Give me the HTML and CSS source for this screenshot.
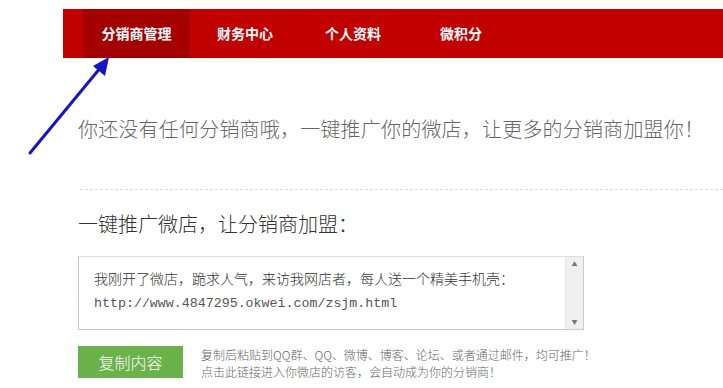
FILE: index.html
```html
<!DOCTYPE html>
<html lang="zh-CN">
<head>
    <meta charset="UTF-8">
    <meta name="viewport" content="width=device-width, initial-scale=1.0">
    <title>分销商管理</title>
    <link rel="stylesheet" href="styles.css">
</head>
<body>
    <div class="nav">
        <a class="nav-item active">分销商管理</a>
        <a class="nav-item">财务中心</a>
        <a class="nav-item">个人资料</a>
        <a class="nav-item">微积分</a>
    </div>

    <div class="main">
        <p class="notice">你还没有任何分销商哦，一键推广你的微店，让更多的分销商加盟你！</p>
        <div class="divider"></div>
        <h2>一键推广微店，让分销商加盟：</h2>

        <div class="share-box">
            <div class="share-text">
                <div class="share-line">我刚开了微店，跪求人气，来访我网店者，每人送一个精美手机壳：</div>
                <div class="share-url">http://www.4847295.okwei.com/zsjm.html</div>
            </div>
            <div class="scrollbar">
                <span class="arrow">&#9650;</span>
                <span class="arrow">&#9660;</span>
            </div>
        </div>

        <div class="copy-row">
            <button type="button" class="copy-btn">复制内容</button>
            <div class="copy-tip">
                复制后粘贴到QQ群、QQ、微博、博客、论坛、或者通过邮件，均可推广！<br>
                点击此链接进入你微店的访客，会自动成为你的分销商！
            </div>
        </div>
    </div>

    <!-- annotation arrow -->
    <svg class="pointer" width="723" height="388" viewBox="0 0 723 388">
        <line x1="30" y1="153" x2="101" y2="67" stroke="#1515c8" stroke-width="3" stroke-linecap="round"/>
        <polygon points="109,57 105,76 93,66" fill="#1515c8"/>
    </svg>
</body>
</html>
```

FILE: styles.css
```css
body {
    margin: 0;
    padding: 0;
    background-color: #fff;
    font-family: "Noto Sans CJK SC", "Liberation Sans", sans-serif;
    position: relative;
    width: 723px;
    height: 388px;
    overflow: hidden;
}
.nav {
    display: flex;
    margin: 9px 0 0 63px;
    padding-left: 20px;
    height: 49px;
    background-color: #c20000;
}
.nav-item {
    width: 108px;
    line-height: 49px;
    text-align: center;
    color: #fff;
    font-size: 14px;
    font-weight: bold;
}
.nav-item.active {
    width: 107px;
    margin-right: 1px;
    background-color: #a50000;
}
.main {
    margin-left: 78px;
}
.notice {
    margin: 57px 0 0;
    font-size: 20px;
    line-height: 28px;
    font-weight: 300;
    letter-spacing: 0.2px;
    color: #666;
}
.divider {
    margin: 46px 0 0 2px;
    border-top: 1px dashed #ddd;
}
h2 {
    margin: 20px 0 0;
    font-size: 20px;
    line-height: 28px;
    font-weight: 300;
    color: #333;
}
.share-box {
    display: flex;
    margin-top: 18px;
    width: 504px;
    height: 72px;
    border: 1px solid #ccc;
    border-top-color: #ddd;
}
.share-text {
    flex: 1;
    padding: 9px 0 0 15px;
}
.share-line {
    font-size: 14px;
    line-height: 25px;
    font-weight: 300;
    color: #333;
}
.share-url {
    font-family: "Liberation Mono", monospace;
    font-size: 13.3px;
    line-height: 25px;
    color: #555;
}
.scrollbar {
    width: 17px;
    display: flex;
    flex-direction: column;
    justify-content: space-between;
    align-items: center;
    background-color: #f0f0f0;
    border-left: 1px solid #e6e6e6;
}
.arrow {
    font-size: 6px;
    line-height: 12px;
    color: #777;
    padding: 1px 0;
}
.copy-row {
    display: flex;
    align-items: flex-start;
    margin-top: 16px;
}
.copy-btn {
    width: 105px;
    height: 32px;
    border: none;
    background-color: #6bb24a;
    color: #fff;
    font-family: "Noto Sans CJK SC", sans-serif;
    font-size: 16px;
    font-weight: 300;
    padding: 0;
    cursor: pointer;
}
.copy-tip {
    margin: 0 0 0 18px;
    font-size: 12px;
    line-height: 17px;
    font-weight: 300;
    color: #666;
}
.pointer {
    position: absolute;
    left: 0;
    top: 0;
    pointer-events: none;
}
```
